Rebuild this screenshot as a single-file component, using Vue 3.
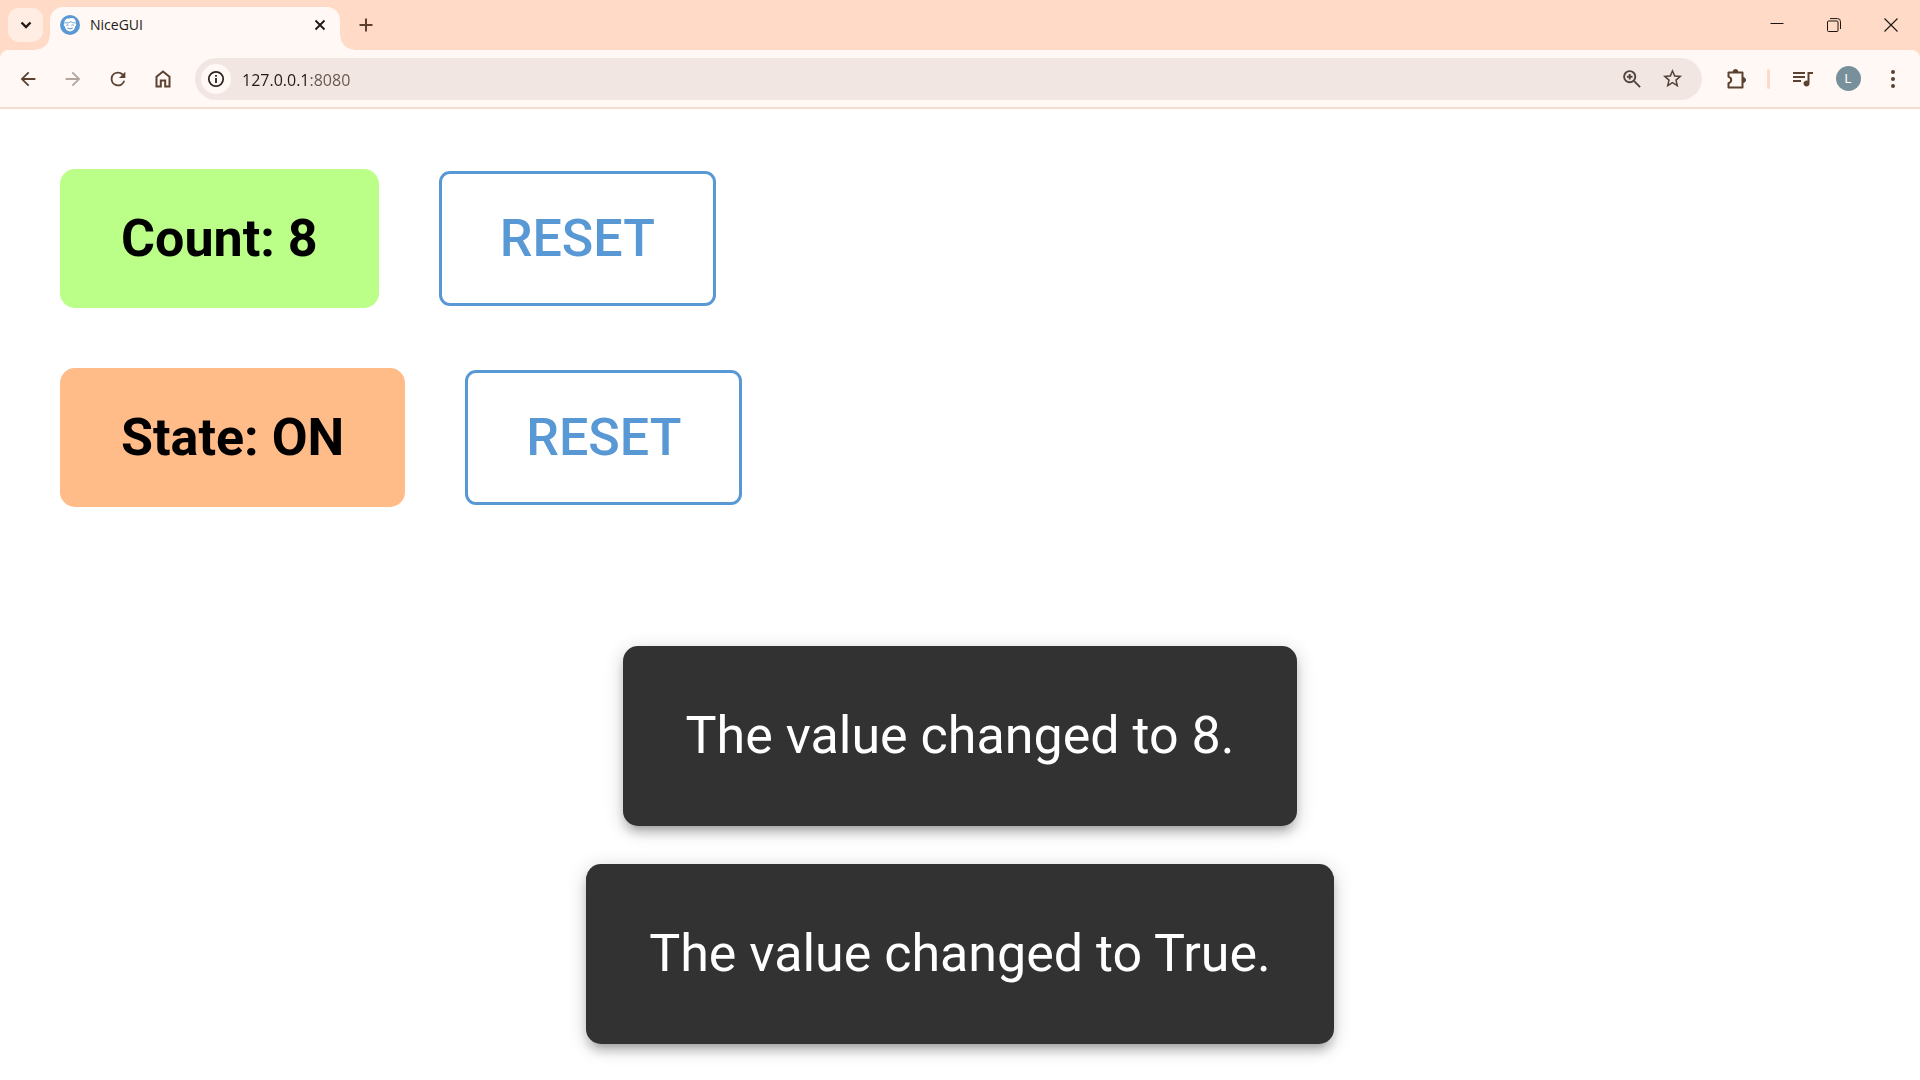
<script setup>
import { ref } from 'vue'

const address = ref('127.0.0.1:8080')
const count = ref(8)
const state = ref(true)
const messages = ref(['The value changed to 8.', 'The value changed to True.'])
</script>

<template>
  <div class="browser">
    <header class="tab-strip">
      <button class="tab-search" aria-label="Search tabs">
        <svg width="12" height="12" viewBox="0 0 12 12"><path d="M1.500 3.500 6 8l4.500-4.500" fill="none" stroke="currentColor" stroke-width="2.400" /></svg>
      </button>
      <div class="tab">
        <svg class="favicon" width="20" height="20" viewBox="0 0 20 20">
          <circle cx="10" cy="10" r="10" fill="#5898d4" />
          <path d="M4.500 8.500C4 5 6.200 3.200 9.500 3.500c2-.9 4.500-.4 5.500 1 .9 1.200.8 2.800.5 4 1 .2 1 2.500-.2 2.800-.5 3-2.600 5.200-5.300 5.200s-4.800-2.200-5.300-5.200c-1.200-.3-1.200-2.600-.2-2.800z" fill="#fff" />
          <path d="M5.200 7.800c2.600.5 4.600-.2 5.600-1.200 1 .9 2.400 1.300 4 1.200" fill="none" stroke="#5898d4" stroke-width="1" />
          <path d="M6.300 10.300q1.200-.9 2.300 0M11.400 10.300q1.200-.9 2.300 0M7.200 12.900q2.800 2 5.600 0" fill="none" stroke="#5898d4" stroke-width="1" />
        </svg>
        <span class="tab-title">NiceGUI</span>
        <button class="tab-close" aria-label="Close tab">
          <svg width="12" height="12" viewBox="0 0 12 12"><path d="m1.500 1.500 9 9m0-9-9 9" stroke="currentColor" stroke-width="1.900" /></svg>
        </button>
      </div>
      <button class="new-tab" aria-label="New tab">
        <svg width="14" height="14" viewBox="0 0 14 14"><path d="M7 .5v13M.5 7h13" stroke="currentColor" stroke-width="2" /></svg>
      </button>
      <div class="window-controls">
        <button aria-label="Minimize">
          <svg width="14" height="14" viewBox="0 0 14 14"><path d="M.5 5.500h13" stroke="currentColor" /></svg>
        </button>
        <button aria-label="Restore">
          <svg width="14" height="14" viewBox="0 0 14 14" fill="none" stroke="currentColor"><rect x=".5" y="3" width="10.500" height="10.500" rx="1" /><path d="M3 .6h7.500q3 0 3 3V11" /></svg>
        </button>
        <button aria-label="Close">
          <svg width="14" height="14" viewBox="0 0 14 14"><path d="m.5.5 13 13m0-13-13 13" stroke="currentColor" stroke-width="1.100" /></svg>
        </button>
      </div>
    </header>

    <nav class="toolbar">
      <button class="tool" aria-label="Back">
        <svg width="22" height="22" viewBox="0 0 24 24" fill="currentColor"><path d="M20 11H7.830l5.590-5.590L12 4l-8 8 8 8 1.410-1.410L7.830 13H20z" /></svg>
      </button>
      <button class="tool" aria-label="Forward" disabled>
        <svg width="22" height="22" viewBox="0 0 24 24" fill="currentColor"><path d="M4 13h12.170l-5.590 5.590L12 20l8-8-8-8-1.410 1.410L16.170 11H4z" /></svg>
      </button>
      <button class="tool" aria-label="Reload">
        <svg width="22" height="22" viewBox="0 0 24 24" fill="currentColor"><path d="M17.650 6.350A7.960 7.960 0 0 0 12 4a8 8 0 1 0 7.730 10h-2.080A6 6 0 1 1 12 6c1.660 0 3.140.69 4.220 1.780L13 11h7V4z" /></svg>
      </button>
      <button class="tool" aria-label="Home">
        <svg width="22" height="22" viewBox="0 0 22 22" fill="none" stroke="currentColor" stroke-width="2"><path d="M4.500 18.500V8.700L11 3.500l6.500 5.200v9.800h-4.300v-6H8.800v6z" /></svg>
      </button>
      <div class="omnibox">
        <button class="site-info" aria-label="View site information">
          <svg width="18" height="18" viewBox="0 0 18 18"><circle cx="9" cy="9" r="7.200" fill="none" stroke="currentColor" stroke-width="1.700" /><path d="M9 8v5M9 5v1.700" stroke="currentColor" stroke-width="1.800" /></svg>
        </button>
        <input v-model="address" class="address" type="text" aria-label="Address and search bar" spellcheck="false" />
        <button class="omni-action" aria-label="Zoom">
          <svg width="20" height="20" viewBox="0 0 20 20" fill="none" stroke="currentColor" stroke-width="1.900"><circle cx="7.700" cy="7.700" r="5.600" /><path d="m11.900 11.900 6.200 6.200M7.700 4.900v5.600M4.900 7.700h5.600" /></svg>
        </button>
        <button class="omni-action" aria-label="Bookmark this tab">
          <svg width="23" height="23" viewBox="0 0 24 24" fill="currentColor"><path d="m22 9.240-7.190-.62L12 2 9.190 8.630 2 9.240l5.460 4.730L5.820 21 12 17.270 18.180 21l-1.630-7.030zM12 15.400l-3.760 2.270 1-4.280-3.320-2.880 4.380-.38L12 6.100l1.710 4.040 4.380.38-3.320 2.880 1 4.280z" /></svg>
        </button>
      </div>
      <button class="tool" aria-label="Extensions">
        <svg width="22" height="22" viewBox="0 0 22 22"><path d="M3.500 4.500h14v15h-14v-4.300q2.700-.8 2.700-3.200T3.500 8.800z" fill="none" stroke="currentColor" stroke-width="2" stroke-linejoin="round" /><path d="M8 4a2.500 2.500 0 0 1 5 0zM18 9.500a2.500 2.500 0 0 1 0 5z" fill="currentColor" stroke="currentColor" /></svg>
      </button>
      <span class="divider"></span>
      <button class="tool" aria-label="Media controls">
        <svg width="20" height="18" viewBox="0 0 20 18"><path d="M0 3h12M0 7h12M0 11h8M15.500 2.900H20" fill="none" stroke="currentColor" stroke-width="2" /><path d="M14.500 2h2v11.500a3 3 0 1 1-2-2.800z" fill="currentColor" /></svg>
      </button>
      <button class="tool" aria-label="Profile"><span class="avatar">L</span></button>
      <button class="tool" aria-label="Menu">
        <svg width="22" height="22" viewBox="0 0 22 22" fill="currentColor"><circle cx="11" cy="4" r="2" /><circle cx="11" cy="11" r="2" /><circle cx="11" cy="18" r="2" /></svg>
      </button>
    </nav>

    <main class="page">
      <div class="row">
        <div class="label count">Count: {{ count }}</div>
        <button class="reset">RESET</button>
      </div>
      <div class="row">
        <div class="label state">State: {{ state ? 'ON' : 'OFF' }}</div>
        <button class="reset">RESET</button>
      </div>
    </main>

    <div class="notifications">
      <div v-for="message in messages" :key="message" class="notification" role="alert">{{ message }}</div>
    </div>
  </div>
</template>

<style>
body {
  background: #fff;
}
</style>

<style scoped>
.browser {
  font-family: 'Open Sans', sans-serif;
  color: #221a15;
}

button {
  display: flex;
  align-items: center;
  justify-content: center;
  padding: 0;
  border: 0;
  background: none;
  color: inherit;
  font: inherit;
}

svg {
  display: block;
  flex: none;
}

.tab-strip {
  display: flex;
  height: 50px;
  background: #ffdbc7;
}

.tab-search {
  width: 35px;
  height: 34px;
  margin: 8px 7px 0 8px;
  border-radius: 11px;
  background: #ffede3;
}

.tab {
  position: relative;
  display: flex;
  align-items: center;
  box-sizing: border-box;
  width: 290px;
  height: 43px;
  margin-top: 7px;
  padding: 0 10px 7px;
  border-radius: 13px 13px 0 0;
  background: #fff8f5;
}

.tab::before,
.tab::after {
  content: '';
  position: absolute;
  bottom: 0;
  width: 14px;
  height: 14px;
}

.tab::before {
  right: 100%;
  background: radial-gradient(circle at 0 0, transparent 13px, #fff8f5 14px);
}

.tab::after {
  left: 100%;
  background: radial-gradient(circle at 100% 0, transparent 13px, #fff8f5 14px);
}

.tab-title {
  flex: 1;
  margin-left: 10px;
  font-size: 14px;
  line-height: 20px;
}

.tab-close {
  width: 20px;
  height: 20px;
}

.new-tab {
  width: 36px;
  height: 50px;
  margin-left: 8px;
  color: #5c4130;
}

.window-controls {
  display: flex;
  margin-right: 1px;
  margin-left: auto;
  color: #1b1410;
}

.window-controls button {
  width: 57px;
  height: 49px;
}

.toolbar {
  display: flex;
  align-items: center;
  gap: 9px;
  height: 57px;
  padding: 0 9px 0 10px;
  border-bottom: 2px solid #f5dcd0;
  background:
    radial-gradient(circle at 10px 10px, #fff8f5 10px, #ffdbc7 11px) 0 0 / 10px 10px no-repeat,
    radial-gradient(circle at 0 10px, #fff8f5 10px, #ffdbc7 11px) 100% 0 / 10px 10px no-repeat,
    #fff8f5;
  color: #5c4130;
}

.tool {
  width: 36px;
  height: 36px;
}

.tool:disabled {
  color: #b3a49c;
}

.omnibox {
  display: flex;
  flex: 1;
  align-items: center;
  box-sizing: border-box;
  height: 42px;
  margin: 0 7px 0 5px;
  padding: 0 10px 0 6px;
  border-radius: 21px;
  background: #f2e6e3;
}

.site-info {
  width: 30px;
  height: 30px;
  border-radius: 50%;
  background: #fff8f5;
  color: #2b211c;
}

.address {
  flex: 1;
  min-width: 0;
  margin-left: 11px;
  padding: 2px 0 0;
  border: 0;
  outline: 0;
  background: linear-gradient(90deg, #221a15 67px, #65544b 67px);
  background-clip: text;
  -webkit-text-fill-color: transparent;
  color: #221a15;
  font: 16px/24px 'Open Sans', sans-serif;
}

.omni-action {
  width: 40px;
  height: 36px;
  color: #52443c;
}

.divider {
  width: 3px;
  height: 20px;
  margin: 0 6px 0 4px;
  border-radius: 2px;
  background: #ffdbc7;
}

.avatar {
  width: 25px;
  height: 25px;
  border-radius: 50%;
  background: #78909c;
  color: #fff;
  font: 13px/25px Roboto, sans-serif;
  text-align: center;
}

.page {
  display: flex;
  flex-direction: column;
  gap: 60px;
  padding: 60px;
  font: 52px/79px Roboto, sans-serif;
}

.row {
  display: flex;
  align-items: center;
  gap: 60px;
}

.label {
  padding: 30px 61px;
  border-radius: 15px;
  color: #000;
  font-weight: 700;
}

.count {
  background: #bbff88;
}

.state {
  background: #ffbb88;
}

.reset {
  box-sizing: border-box;
  height: 135px;
  padding: 0 58px;
  border: 3px solid #5898d4;
  border-radius: 11px;
  color: #5898d4;
  font-weight: 500;
}

.notifications {
  position: fixed;
  right: 0;
  bottom: 36px;
  left: 0;
  display: flex;
  flex-direction: column;
  align-items: center;
  gap: 38px;
  pointer-events: none;
}

.notification {
  padding: 50px 63px;
  border-radius: 15px;
  background: #323232;
  box-shadow:
    0 4px 19px rgba(0, 0, 0, 0.2),
    0 8px 8px rgba(0, 0, 0, 0.14),
    0 11px 4px -8px rgba(0, 0, 0, 0.12);
  color: #fff;
  font: 52px/80px Roboto, sans-serif;
}
</style>
